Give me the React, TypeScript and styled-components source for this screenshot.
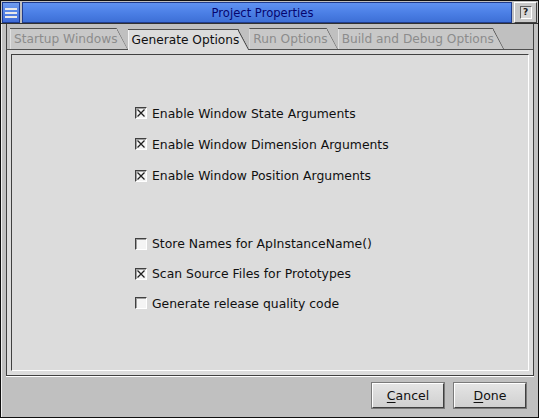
import React from "react";
import styled, { createGlobalStyle } from "styled-components";

const Global = createGlobalStyle`
  html, body { margin: 0; padding: 0; background: #c0c0c0; }
  body { font-family: "DejaVu Sans", "Liberation Sans", sans-serif; }
`;

const Window = styled.div`
  width: 539px;
  height: 418px;
  box-sizing: border-box;
  border: 1px solid #101010;
  background: #c0c0c0;
  display: flex;
  flex-direction: column;
`;

const TitleBar = styled.div`
  height: 21px;
  display: flex;
  align-items: stretch;
  gap: 2px;
  padding: 1px 1px 0 1px;
  border-bottom: 1px solid #303030;
`;

const MenuButton = styled.div`
  width: 16px;
  background: linear-gradient(#6f9cf0, #3c6ad8);
  border: 1px solid #1c3a90;
  display: flex;
  align-items: center;
  justify-content: center;
`;

const Caption = styled.div`
  flex: 1;
  background: linear-gradient(#5f92f2 0%, #4c80e6 50%, #3d6fd6 100%);
  border: 1px solid #203c8c;
  color: #06066e;
  font-size: 11.6px;
  padding-right: 9px;
  display: flex;
  align-items: center;
  justify-content: center;
`;

const HelpButton = styled.div`
  width: 21px;
  background: #c8c8c8;
  border: 1px solid;
  border-color: #ffffff #404040 #404040 #ffffff;
  display: flex;
  align-items: center;
  justify-content: center;
`;

const HelpGlyph = styled.div`
  width: 10px;
  height: 11px;
  border: 1px solid;
  border-color: #606060 #ffffff #ffffff #606060;
  background: #d8d8d8;
  font-size: 9px;
  font-weight: bold;
  line-height: 11px;
  text-align: center;
  color: #202020;
`;

const Body = styled.div`
  flex: 1;
  display: flex;
  flex-direction: column;
  padding: 0 4px 4px 4px;
  border-left: 1px solid #f0f0f0;
`;

const Content = styled.div`
  flex: 1;
  display: flex;
  flex-direction: column;
  border-left: 1px solid #404040;
  border-right: 1px solid #404040;
  border-bottom: 1px solid #404040;
`;

const TabStrip = styled.div`
  height: 25px;
  display: flex;
  align-items: flex-end;
  padding-left: 3px;
  border-bottom: 1px solid #505050;
`;

const Tab = styled.div<{ $active?: boolean }>`
  position: relative;
  height: 21px;
  box-sizing: border-box;
  padding: 1px 10px 0 4px;
  display: flex;
  align-items: center;
  font-size: 12.2px;
  color: ${(p) => (p.$active ? "#101010" : "#8c8c8c")};
  background: ${(p) => (p.$active ? "#dcdcdc" : "#c8c8c8")};
  clip-path: polygon(0 0, calc(100% - 11px) 0, 100% 100%, 0 100%);
  box-shadow: inset 0 1px 0 #505050, inset 1px 0 0 ${(p) => (p.$active ? "#f4f4f4" : "#e0e0e0")};
  margin-bottom: ${(p) => (p.$active ? -1 : 0)}px;
  z-index: ${(p) => (p.$active ? 2 : 1)};
  white-space: nowrap;
`;

const TabEdge = styled.svg`
  position: absolute;
  right: 0;
  top: 0;
  width: 11px;
  height: 100%;
`;

const Panel = styled.div`
  flex: 1;
  background: #dcdcdc;
  padding: 4px;
  display: flex;
`;

const Inset = styled.div`
  flex: 1;
  border: 1px solid;
  border-color: #404040 #ffffff #ffffff #404040;
  padding: 43px 0 0 123px;
  display: flex;
  flex-direction: column;
`;

const Group = styled.div<{ $gap?: number }>`
  display: flex;
  flex-direction: column;
  margin-top: ${(p) => p.$gap ?? 0}px;
`;

const Row = styled.label<{ $h: number }>`
  height: ${(p) => p.$h}px;
  display: flex;
  align-items: center;
  gap: 5px;
  font-size: 12.4px;
  color: #101010;
`;

const Box = styled.span`
  width: 10px;
  height: 10px;
  border: 1px solid;
  border-color: #404040 #ffffff #ffffff #404040;
  background: #f4f4f4;
  box-shadow: inset 1px 1px 0 #a0a0a0;
  display: inline-flex;
  position: relative;
  flex-shrink: 0;
`;

const Mark = styled.svg`
  position: absolute;
  left: 0;
  top: 0;
`;

const Footer = styled.div`
  height: 36px;
  display: flex;
  justify-content: flex-end;
  align-items: center;
  gap: 10px;
  padding-right: 8px;
  border-top: 1px solid #ffffff;
`;

const Button = styled.button`
  width: 72px;
  height: 25px;
  font-family: inherit;
  font-size: 12.5px;
  color: #101010;
  background: linear-gradient(#e4e4e4, #d0d0d0);
  border: 1px solid;
  border-color: #ffffff #404040 #404040 #ffffff;
  outline: 1px solid #7a7a7a;
  padding: 0;
  & u { text-decoration-thickness: 1px; text-underline-offset: 2px; }
`;

const Check = ({ on }: { on: boolean }) => (
  <Box>
    {on && (
      <Mark width="10" height="10" viewBox="0 0 10 10">
        <path d="M1.5 1.5 L8.5 8.5 M8.5 1.5 L1.5 8.5" stroke="#202020" strokeWidth="1.3" />
      </Mark>
    )}
  </Box>
);

const upper = [
  { label: "Enable Window State Arguments", on: true, h: 30 },
  { label: "Enable Window Dimension Arguments", on: true, h: 32 },
  { label: "Enable Window Position Arguments", on: true, h: 31 },
];
const lower = [
  { label: "Store Names for ApInstanceName()", on: false, h: 31 },
  { label: "Scan Source Files for Prototypes", on: true, h: 29 },
  { label: "Generate release quality code", on: false, h: 30 },
];

const tabs = ["Startup Windows", "Generate Options", "Run Options", "Build and Debug Options"];

export default function App() {
  return (
    <>
      <Global />
      <Window>
        <TitleBar>
          <MenuButton>
            <svg width="12" height="11" viewBox="0 0 12 11">
              <rect x="0" y="1" width="12" height="2" fill="#e8e8e8" />
              <rect x="0" y="5" width="12" height="2" fill="#e8e8e8" />
              <rect x="0" y="9" width="12" height="2" fill="#e8e8e8" />
            </svg>
          </MenuButton>
          <Caption>Project Properties</Caption>
          <HelpButton>
            <HelpGlyph>?</HelpGlyph>
          </HelpButton>
        </TitleBar>
        <Body>
          <Content>
            <TabStrip>
              {tabs.map((t, i) => (
                <Tab key={t} $active={i === 1}>
                  {t}
                  <TabEdge viewBox="0 0 11 21" preserveAspectRatio="none">
                    <line x1="0" y1="0.5" x2="11" y2="21" stroke="#404040" strokeWidth="1.2" />
                  </TabEdge>
                </Tab>
              ))}
            </TabStrip>
            <Panel>
              <Inset>
                <Group>
                  {upper.map((r) => (
                    <Row key={r.label} $h={r.h}>
                      <Check on={r.on} />
                      {r.label}
                    </Row>
                  ))}
                </Group>
                <Group $gap={37}>
                  {lower.map((r) => (
                    <Row key={r.label} $h={r.h}>
                      <Check on={r.on} />
                      {r.label}
                    </Row>
                  ))}
                </Group>
              </Inset>
            </Panel>
          </Content>
          <Footer>
            <Button><u>C</u>ancel</Button>
            <Button><u>D</u>one</Button>
          </Footer>
        </Body>
      </Window>
    </>
  );
}
